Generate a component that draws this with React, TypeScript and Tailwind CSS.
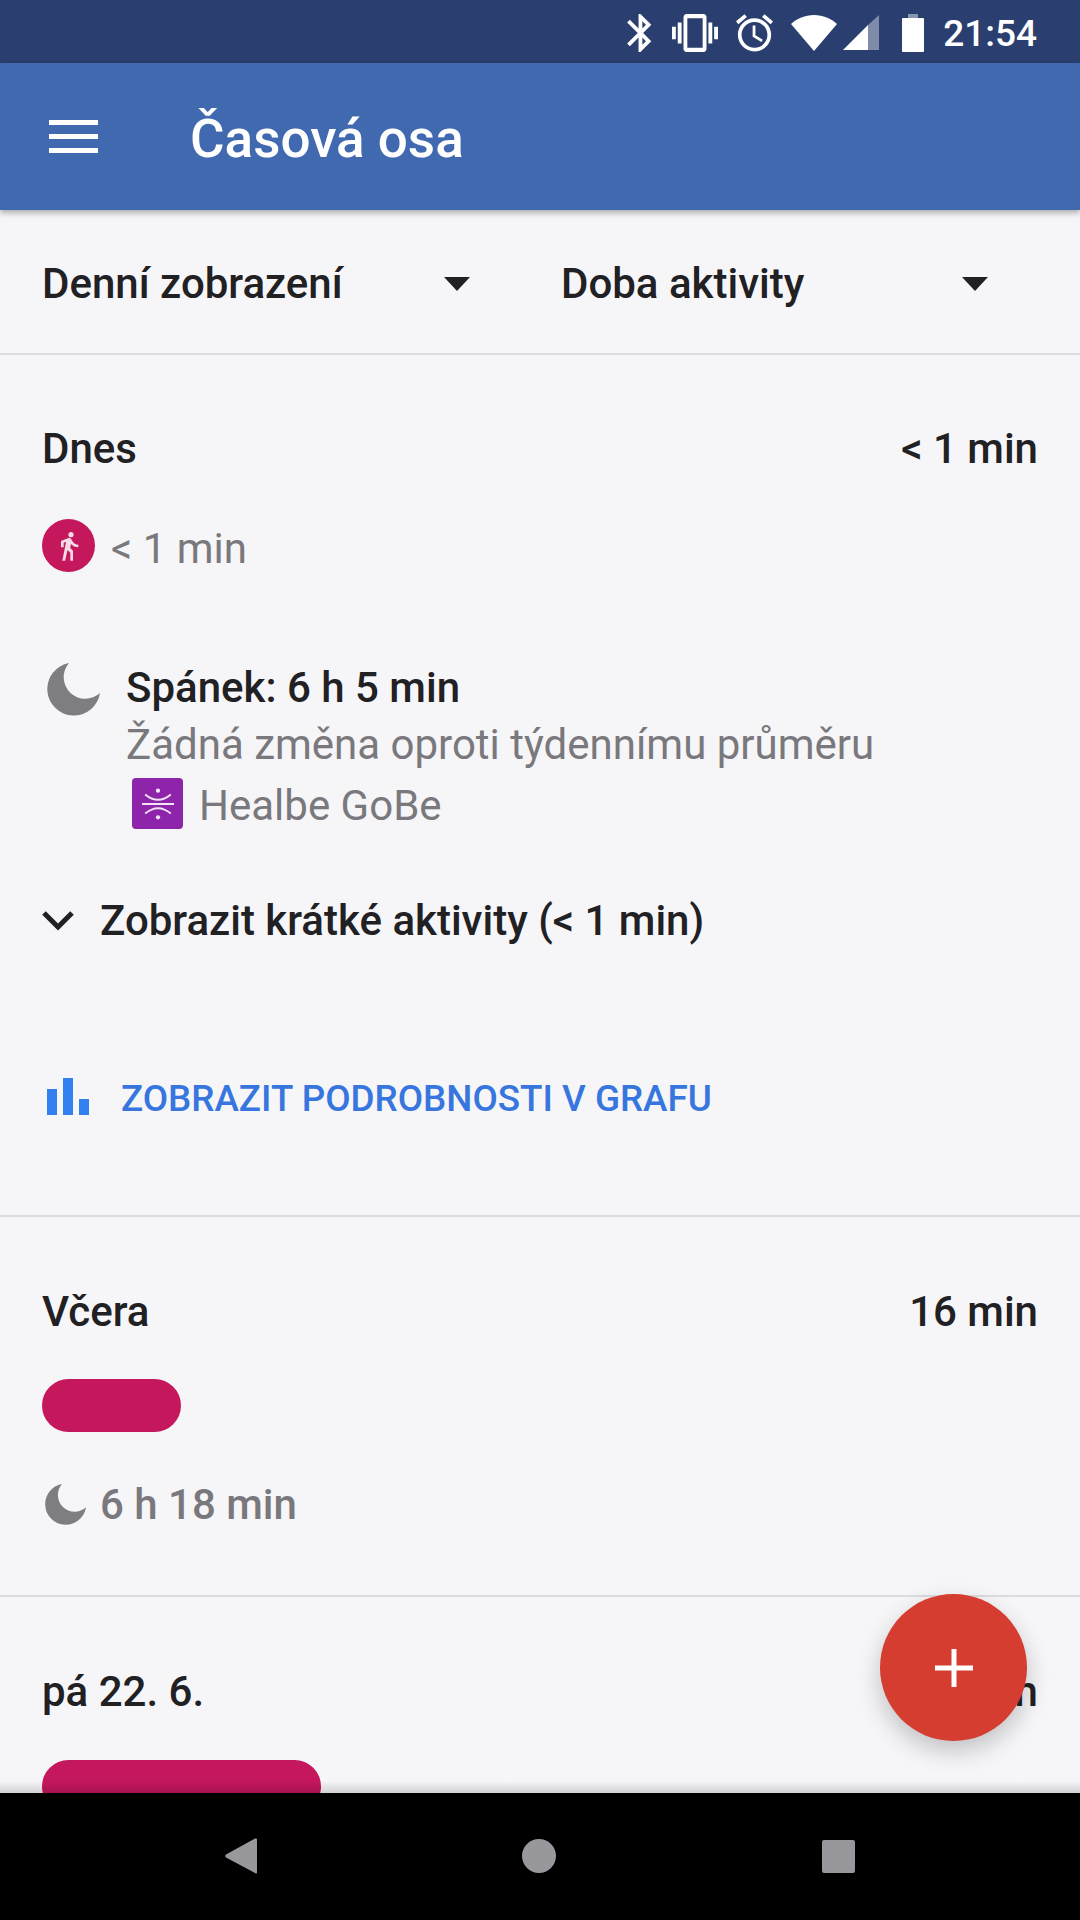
const Moon = ({ className }: { className: string }) => (
  <svg viewBox="0 0 53 53" className={className} fill="#7e7d81">
    <path d="M22 0A26.5 26.5 0 1 0 53 30A21.6 21.6 0 0 1 22 0Z" />
  </svg>
);

function StatusBar() {
  return (
    <div className="flex h-[63px] shrink-0 items-center bg-[#2a3f6f] pr-[43px] text-white">
      <div className="mt-[2px] ml-auto flex items-center">
        <svg viewBox="5 2 13 20" className="h-[38px] w-[25px]" fill="white">
          <path d="M17.71 7.71L12 2h-1v7.59L6.41 5 5 6.41 10.59 12 5 17.59 6.41 19 11 14.41V22h1l5.71-5.71-4.3-4.29 4.3-4.29zM13 5.83l1.88 1.88L13 9.59V5.83zm1.88 10.46L13 18.17v-3.76l1.88 1.88z" />
        </svg>
        <svg viewBox="0 3 24 18" className="ml-[20px] h-[38px] w-[46px]" fill="white" preserveAspectRatio="none">
          <path d="M0 15h2V9H0v6zm3 2h2V7H3v10zm19-8v6h2V9h-2zm-3 8h2V7h-2v10zM16.5 3h-9C6.67 3 6 3.67 6 4.5v15c0 .83.67 1.5 1.5 1.5h9c.83 0 1.5-.67 1.5-1.5v-15c0-.83-.67-1.5-1.5-1.5zM16 19H8V5h8v14z" />
        </svg>
        <svg viewBox="2 2 20 20" className="ml-[18px] h-[38px] w-[37px]" fill="white">
          <path d="M22 5.72l-4.6-3.86-1.29 1.53 4.6 3.86L22 5.72zM7.88 3.39L6.6 1.86 2 5.71l1.29 1.53 4.59-3.85zM12.5 8H11v6l4.75 2.85.75-1.23-4-2.37V8zM12 4c-4.97 0-9 4.03-9 9s4.03 9 9 9 9-4.03 9-9-4.03-9-9-9zm0 16c-3.87 0-7-3.13-7-7s3.13-7 7-7 7 3.13 7 7-3.13 7-7 7z" />
        </svg>
        <svg viewBox="0 0 46 36" className="ml-[18px] h-[36px] w-[46px]" fill="white">
          <path d="M23 36L0 9C6 3.5 14 0 23 0s17 3.5 23 9Z" />
        </svg>
        <svg viewBox="0 0 36 35" className="ml-[6px] h-[35px] w-[36px]">
          <path d="M0 35L25 10V35Z" fill="white" />
          <path d="M25 10L36 0V35H25Z" fill="white" fillOpacity="0.4" />
        </svg>
        <svg viewBox="0 0 22 38" className="ml-[23px] h-[38px] w-[22px]" fill="white">
          <path d="M6 4V0H16V4Z" fillOpacity="0.45" />
          <path d="M1 4H21A1 1 0 0 1 22 5V37A1 1 0 0 1 21 38H1A1 1 0 0 1 0 37V5A1 1 0 0 1 1 4Z" />
        </svg>
        <span className="mt-[2px] ml-[19px] text-[37px] leading-none font-medium">21:54</span>
      </div>
    </div>
  );
}

function Filter({ label, className }: { label: string; className: string }) {
  return (
    <div className={`flex items-center ${className}`}>
      <span className="text-[42px] font-medium text-[#212023]">{label}</span>
      <div className="ml-auto h-0 w-0 border-x-[13px] border-t-[14px] border-x-transparent border-t-[#212023]" />
    </div>
  );
}

function DayHeader({ day, total }: { day: string; total: string }) {
  return (
    <div className="flex h-[54px] items-center justify-between text-[42px] font-medium text-[#212023]">
      <span>{day}</span>
      <span>{total}</span>
    </div>
  );
}

export default function App() {
  return (
    <div className="relative flex h-[1920px] w-[1080px] flex-col overflow-hidden bg-[#f6f5f8] font-['Roboto',sans-serif]">
      <StatusBar />

      <header className="z-10 flex h-[147px] shrink-0 items-center bg-[#4169b0] pl-[49px] text-white shadow-[0_3px_6px_rgba(0,0,0,0.3)]">
        <div className="flex w-[49px] flex-col gap-[9px]">
          <div className="h-[5px] bg-white" />
          <div className="h-[5px] bg-white" />
          <div className="h-[5px] bg-white" />
        </div>
        <h1 className="mt-[6px] ml-[92px] text-[53px] font-medium">Časová osa</h1>
      </header>

      <div className="flex h-[145px] shrink-0 items-center border-b-2 border-[#dcdbdf] pt-[4px]">
        <Filter label="Denní zobrazení" className="ml-[42px] w-[428px]" />
        <Filter label="Doba aktivity" className="ml-[91px] w-[427px]" />
      </div>

      <main className="min-h-0 flex-1 overflow-hidden">
        <section className="h-[862px] border-b-2 border-[#dcdbdf] pt-[66px] pr-[42px] pl-[42px]">
          <DayHeader day="Dnes" total="< 1 min" />

          <div className="mt-[44px] flex h-[53px] items-center">
            <div className="flex h-[53px] w-[53px] items-center justify-center rounded-full bg-[#c4175c]">
              <svg viewBox="0 0 24 24" className="h-[32px] w-[32px]" fill="#f6dce6">
                <path d="M13.5 5.5c1.1 0 2-.9 2-2s-.9-2-2-2-2 .9-2 2 .9 2 2 2zM9.8 8.9L7 23h2.1l1.8-8 2.1 2v6h2v-7.5l-2.1-2 .6-3C14.8 12 16.8 13 19 13v-2c-1.9 0-3.5-1-4.3-2.4l-1-1.6c-.4-.6-1-1-1.7-1-.3 0-.5.1-.8.1L6 8.3V13h2V9.6l1.8-.7" />
              </svg>
            </div>
            <span className="mt-[5px] ml-[16px] text-[42px] leading-[53px] text-[#79787c]">&lt; 1 min</span>
          </div>

          <div className="mt-[88px] flex">
            <Moon className="mt-[3px] ml-[5px] h-[53px] w-[53px] shrink-0" />
            <div className="ml-[26px]">
              <div className="h-[56px] text-[42px] leading-[56px] font-medium text-[#212023]">Spánek: 6 h 5 min</div>
              <div className="h-[58px] text-[42px] leading-[58px] text-[#79787c]">Žádná změna oproti týdennímu průměru</div>
              <div className="mt-[4px] flex h-[51px] items-center">
                <div className="ml-[6px] flex h-[51px] w-[51px] items-center justify-center rounded-[4px] bg-[#8e24aa]">
                  <svg viewBox="0 0 30 30" className="h-[32px] w-[32px]" fill="none" stroke="#f3e3f7" strokeWidth="1.8">
                    <path d="M0 15H30M3 6Q15 16 27 6M3 24Q15 14 27 24" />
                    <circle cx="15" cy="2.5" r="2" fill="#f3e3f7" stroke="none" />
                    <circle cx="15" cy="27.5" r="2" fill="#f3e3f7" stroke="none" />
                  </svg>
                </div>
                <span className="mt-[3px] ml-[16px] text-[42px] leading-[51px] text-[#79787c]">Healbe GoBe</span>
              </div>
            </div>
          </div>

          <div className="mt-[63px] flex h-[56px] items-center">
            <svg viewBox="0 0 32 21" className="h-[21px] w-[32px]" fill="none" stroke="#212023" strokeWidth="5">
              <path d="M2 3L16 17L30 3" />
            </svg>
            <span className="ml-[26px] text-[42px] font-medium text-[#212023]">Zobrazit krátké aktivity (&lt; 1 min)</span>
          </div>

          <div className="mt-[122px] flex h-[56px] items-center">
            <svg viewBox="0 0 42 37" className="-mt-[4px] ml-[5px] h-[37px] w-[42px]" fill="#3380f0">
              <path d="M0 11H10V37H0ZM16 0H26V37H16ZM32 21H42V37H32Z" />
            </svg>
            <span className="mt-[2px] ml-[32px] text-[36.8px] font-medium text-[#3776de]">ZOBRAZIT PODROBNOSTI V GRAFU</span>
          </div>
        </section>

        <section className="h-[380px] border-b-2 border-[#dcdbdf] pt-[67px] pr-[42px] pl-[42px]">
          <DayHeader day="Včera" total="16 min" />
          <div className="mt-[41px] h-[53px] w-[139px] rounded-full bg-[#c4175c]" />
          <div className="mt-[52px] flex items-center">
            <Moon className="ml-[3px] h-[41px] w-[41px]" />
            <span className="ml-[14px] text-[42px] leading-[41px] font-medium text-[#79787c]">6 h 18 min</span>
          </div>
        </section>

        <section className="pt-[67px] pr-[42px] pl-[42px]">
          <DayHeader day="pá 22. 6." total="37 min" />
          <div className="mt-[42px] h-[53px] w-[279px] rounded-full bg-[#c4175c]" />
        </section>
      </main>

      <nav className="relative flex h-[127px] shrink-0 items-center bg-black pb-[1px]">
        <div className="absolute inset-x-0 -top-[12px] h-[12px] bg-gradient-to-b from-transparent to-black/15" />
        <svg viewBox="0 0 32 36" className="ml-[225px] h-[36px] w-[32px]" fill="#98979b">
          <path d="M31 0.5a1 1 0 0 1 1 1V34.5a1 1 0 0 1-1.5 .8L1 19.5a2 2 0 0 1 0-3L30 .5Z" />
        </svg>
        <div className="ml-[265px] h-[34px] w-[34px] rounded-full bg-[#98979b]" />
        <div className="ml-[266px] h-[33px] w-[33px] rounded-[2px] bg-[#98979b]" />
      </nav>

      <button className="absolute top-[1594px] left-[880px] flex h-[147px] w-[147px] items-center justify-center rounded-full bg-[#d43d2f] shadow-[0_10px_24px_rgba(0,0,0,0.22)]">
        <svg viewBox="0 0 38 38" className="h-[38px] w-[38px]" fill="white">
          <path d="M16.5 0H21.5V16.5H38V21.5H21.5V38H16.5V21.5H0V16.5H16.5Z" />
        </svg>
      </button>
    </div>
  );
}
